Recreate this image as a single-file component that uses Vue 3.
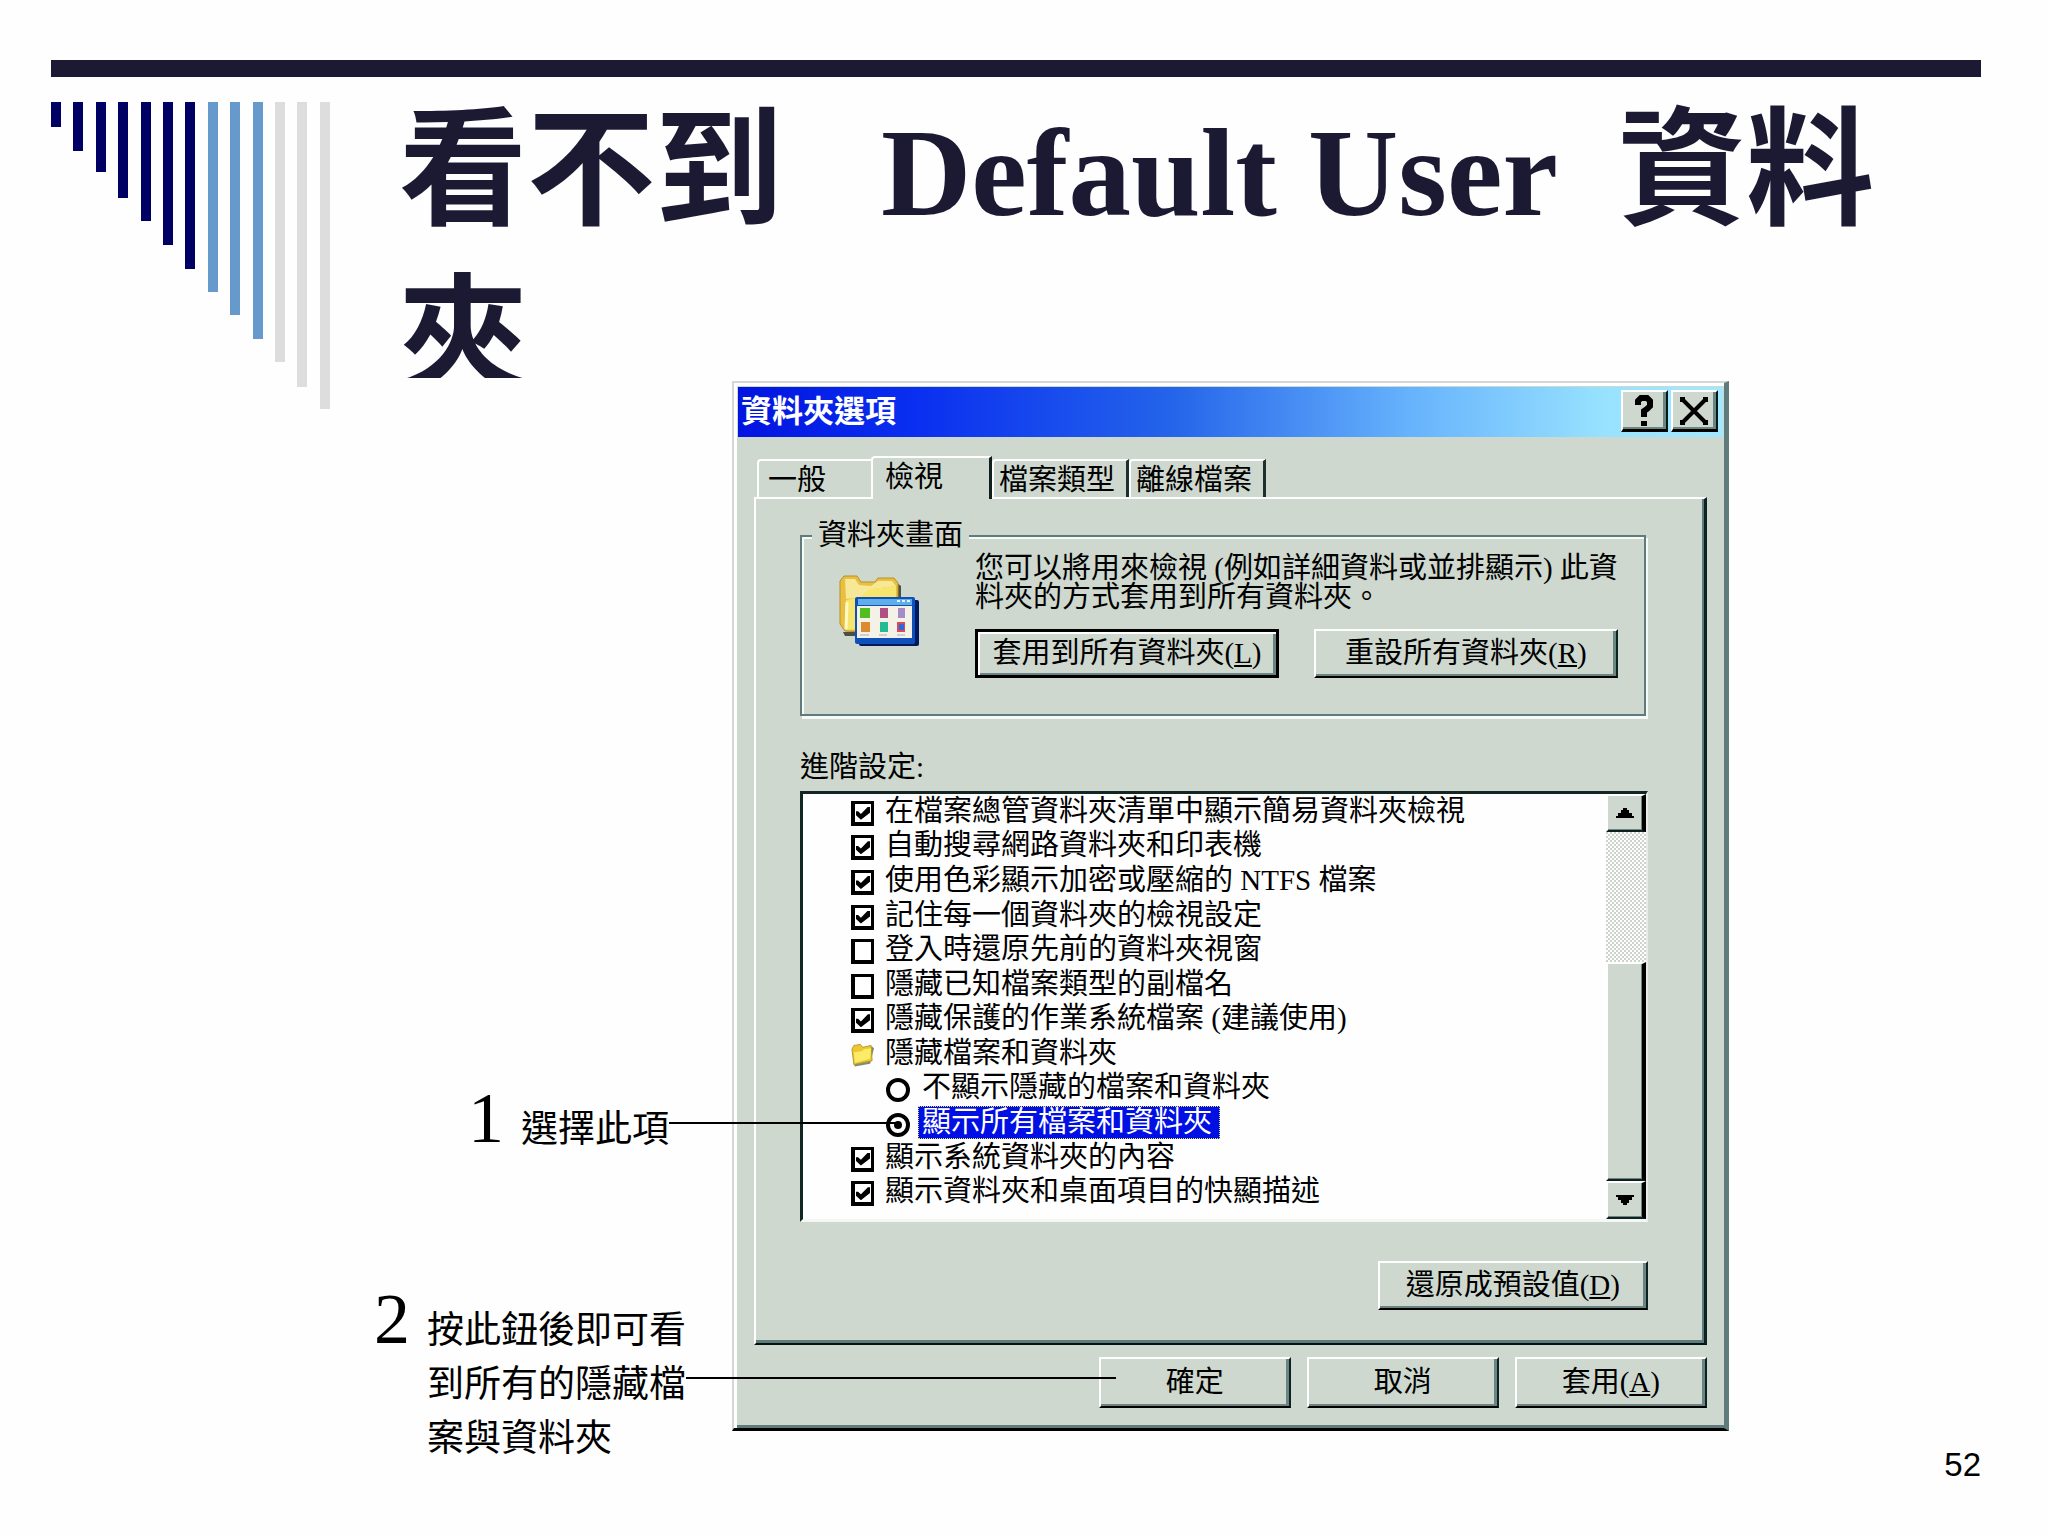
<script setup>
import { ref } from 'vue'

const stripes = [
  { h: 25, c: 'navy' }, { h: 49, c: 'navy' }, { h: 70, c: 'navy' }, { h: 96, c: 'navy' },
  { h: 119, c: 'navy' }, { h: 143, c: 'navy' }, { h: 167, c: 'navy' },
  { h: 190, c: 'sky' }, { h: 213, c: 'sky' }, { h: 237, c: 'sky' },
  { h: 260, c: 'pale' }, { h: 285, c: 'pale' }, { h: 307, c: 'pale' }
]

const rows = ref([
  { type: 'check', on: true, text: '在檔案總管資料夾清單中顯示簡易資料夾檢視' },
  { type: 'check', on: true, text: '自動搜尋網路資料夾和印表機' },
  { type: 'check', on: true, text: '使用色彩顯示加密或壓縮的 NTFS 檔案' },
  { type: 'check', on: true, text: '記住每一個資料夾的檢視設定' },
  { type: 'check', on: false, text: '登入時還原先前的資料夾視窗' },
  { type: 'check', on: false, text: '隱藏已知檔案類型的副檔名' },
  { type: 'check', on: true, text: '隱藏保護的作業系統檔案 (建議使用)' },
  { type: 'folder', text: '隱藏檔案和資料夾' },
  { type: 'radio', value: 'hide', text: '不顯示隱藏的檔案和資料夾' },
  { type: 'radio', value: 'show', text: '顯示所有檔案和資料夾' },
  { type: 'check', on: true, text: '顯示系統資料夾的內容' },
  { type: 'check', on: true, text: '顯示資料夾和桌面項目的快顯描述' }
])
const hidden = ref('show')
</script>

<template>
  <main class="slide">
    <div class="rule"></div>
    <div class="body">
      <div class="stripes" aria-hidden="true">
        <i v-for="(s, n) in stripes" :key="n" :class="s.c" :style="{ height: s.h + 'px' }"></i>
      </div>
      <h1>看不到<span class="latin">Default User</span>資料夾</h1>

      <section class="figure">
        <ol class="callouts">
          <li class="callout first">
            <span class="num">1</span>
            <p><span class="lead short">選擇此項</span></p>
          </li>
          <li class="callout">
            <span class="num">2</span>
            <p>按此鈕後即可看<br><span class="lead long">到所有的隱藏檔</span><br>案與資料夾</p>
          </li>
        </ol>

        <div class="dialog">
          <header class="titlebar">
            <h2>資料夾選項</h2>
            <button class="cap" aria-label="說明">
              <svg width="20" height="32" viewBox="0 0 20 32"><path d="M4 10V6l3-3h6l3 3v5l-3 3-3 2v6" fill="none" stroke="#000" stroke-width="6" /><path d="M7 26h6v5H7z" /></svg>
            </button>
            <button class="cap" aria-label="關閉">
              <svg width="28" height="28" viewBox="0 0 28 28"><path d="M2 2l24 24M26 2L2 26" stroke="#000" stroke-width="4" /><path d="M0 0h5v5H0zM23 0h5v5h-5zM0 23h5v5H0zM23 23h5v5h-5z" /></svg>
            </button>
          </header>

          <nav class="tabs">
            <button class="tab">一般</button>
            <button class="tab active">檢視</button>
            <button class="tab wide">檔案類型</button>
            <button class="tab wide">離線檔案</button>
          </nav>

          <div class="panel">
            <fieldset class="group">
              <legend>資料夾畫面</legend>
              <svg class="view-icon" width="84" height="76" viewBox="0 0 84 76">
                <path d="M6 58h12v4H8zM56 6l8 6v16h-4V10z" fill="#1d2416" opacity=".75" />
                <path d="M3 7l4-5h13l4 6h14l3-4h16l4 5v17H26v32L8 57 3 50z" fill="#e8bf3e" stroke="#b98f2c" />
                <path d="M8 5h10l4 6 12 1 7-5h14l4 5-22 3-10 8-18 2z" fill="#f6e896" />
                <path d="M9 26l14-3 10-8 26-3v12H26v31L8 56z" fill="#f8e56d" />
                <path d="M10 28l-1 27" stroke="#fffac4" stroke-width="3" />
                <rect x="22" y="26" width="60" height="46" rx="2" fill="#001a60" />
                <rect x="18" y="23" width="60" height="47" rx="2" fill="#0f50ba" />
                <rect x="21" y="25" width="54" height="6" fill="#5faee8" />
                <path d="M60 27h3M65 27h3M70 27h3" stroke="#e3f3ff" stroke-width="2" />
                <rect x="20" y="32" width="55" height="32" fill="#f4f2e6" />
                <path d="M23 34h10v10H23z" fill="#52bd20" />
                <path d="M43 34h8v10h-8z" fill="#b04f83" />
                <path d="M61 34h7v10h-7z" fill="#a58bc7" />
                <path d="M24 48h9v10h-9z" fill="#dc8930" />
                <path d="M43 48h8v10h-8z" fill="#26b994" />
                <path d="M60 48h8v10h-8z" fill="#d94a5b" />
                <path d="M62 50h5v6h-5z" fill="#3465d7" />
                <path d="M23 61h9M42 61h8M60 61h8" stroke="#a9a9bd" />
              </svg>
              <div class="group-main">
                <p>您可以將用來檢視 (例如詳細資料或並排顯示) 此資<br>料夾的方式套用到所有資料夾。</p>
                <div class="pair">
                  <button class="btn default">套用到所有資料夾(<u>L</u>)</button>
                  <button class="btn">重設所有資料夾(<u>R</u>)</button>
                </div>
              </div>
            </fieldset>

            <h3>進階設定:</h3>
            <div class="listbox">
              <ul>
                <li v-for="(r, n) in rows" :key="n">
                  <label v-if="r.type === 'check'"><input v-model="r.on" type="checkbox"><span>{{ r.text }}</span></label>
                  <label v-else-if="r.type === 'radio'" class="sub">
                    <input v-model="hidden" type="radio" name="hidden-files" :value="r.value">
                    <span class="choice" :class="{ selected: hidden === r.value }">{{ r.text }}</span>
                  </label>
                  <div v-else class="folder">
                    <svg width="23" height="25" viewBox="0 0 24 25">
                      <path d="M3 21l1 3 16-3 4-16-2-2z" fill="#4c5a3c" opacity=".7" />
                      <path d="M1 6l2-4 7-1 2 3 9-2 1 16-19 4z" fill="#eec62f" stroke="#b4982c" />
                      <path d="M3 9l8-1 3-2 7-1-1 11-16 4z" fill="#fbec68" />
                    </svg>
                    <span>{{ r.text }}</span>
                  </div>
                </li>
              </ul>
              <div class="scroll">
                <button class="arrow" aria-label="向上"><svg width="18" height="10" viewBox="0 0 18 10"><path d="M7 0h4v2h2v3h3v3h2v2H0V8h2V5h3V2h2z" /></svg></button>
                <div class="track"></div>
                <div class="thumb"></div>
                <button class="arrow" aria-label="向下"><svg width="18" height="10" viewBox="0 0 18 10"><path d="M0 0h18v2h-2v3h-3v3h-2v2H7V8H5V5H2V2H0z" /></svg></button>
              </div>
            </div>
            <button class="btn restore">還原成預設值(<u>D</u>)</button>
          </div>

          <footer class="actions">
            <button class="btn">確定</button>
            <button class="btn">取消</button>
            <button class="btn">套用(<u>A</u>)</button>
          </footer>
        </div>

        <div class="page-no">52</div>
      </section>
    </div>
  </main>
</template>

<style>
body {
  margin: 0;
  background: #fefefe;
}
</style>

<style scoped>
* {
  box-sizing: border-box;
}
h1, h2, h3, p, ul, ol {
  margin: 0;
  padding: 0;
  list-style: none;
  font-weight: 400;
}
.slide {
  min-height: 100vh;
  padding: 60px 67px 0 51px;
  color: #000;
}
.rule {
  height: 17px;
  background: #1c1a33;
}
.body {
  display: grid;
  grid-template-columns: 279px 1fr;
  grid-template-rows: 301px auto;
}
.stripes {
  grid-row: 1 / 3;
  display: flex;
  justify-content: space-between;
  padding-top: 25px;
}
.stripes i {
  width: 10px;
}
.navy {
  background: #000064;
}
.sky {
  background: #6699cc;
}
.pale {
  background: #dddddd;
}
h1 {
  overflow: hidden;
  padding-left: 69px;
  color: #1c1a33;
  font: 700 128px/166px "Noto Sans CJK TC", sans-serif;
}
.latin {
  margin: 0 60px 0 98px;
  font: 700 125px/100px "Liberation Serif", serif;
}
.figure {
  display: flex;
  align-items: flex-start;
  padding: 3px 0 0 44px;
}
.callouts {
  flex: none;
  width: 358px;
  padding: 710px 0 21px;
  font: 300 37px/54px "Noto Sans CJK TC", sans-serif;
}
.callout {
  display: flex;
  align-items: baseline;
  gap: 17px;
}
.first {
  margin: 0 0 139px 94px;
}
.num {
  font: 400 72px/54px "Liberation Serif", serif;
}
.lead {
  position: relative;
}
.lead::after {
  content: "";
  position: absolute;
  z-index: 1;
  top: 42%;
  left: 100%;
  height: 2px;
  background: #000;
}
.short::after {
  width: 228px;
}
.long::after {
  width: 430px;
}
.dialog {
  flex: 0 1 995px;
  padding: 0 17px 20px 0;
  background: #ced8ce;
  border: 2px solid #d3d8d3;
  border-right: 5px solid #5f7b7c;
  border-bottom: 3px solid #000;
  box-shadow: inset 3px 3px #fff, inset 0 -3px #5f7b7c;
  color: #000;
  font: 400 29px/29px "Liberation Serif", "Noto Sans CJK TC", serif;
}
button {
  display: flex;
  align-items: center;
  justify-content: center;
  padding: 0;
  border: 0;
  border-radius: 0;
  background: #ced8ce;
  color: #000;
  font: inherit;
  white-space: pre;
}
.titlebar {
  display: flex;
  align-items: center;
  gap: 3px;
  height: 54px;
  margin: 0 -16px 0 4px;
  padding: 2px 5px 0 3px;
  background: linear-gradient(90deg, #0214e0 0%, #0a2ff0 18%, #2464ea 44%, #66b2fc 68%, #98e2ff 88%, #a4e8ff 100%) 0 4px / 100% 50px no-repeat;
}
.titlebar h2 {
  flex: 1;
  padding-bottom: 4px;
  color: #fff;
  font: 700 31px/44px "Noto Sans CJK TC", sans-serif;
}
.cap {
  width: 47px;
  height: 42px;
  border: solid;
  border-width: 2px 2px 3px;
  border-color: #fff #001a1a #000 #fff;
  box-shadow: inset -3px -2px #6b8583;
}
.tabs {
  display: flex;
  align-items: flex-end;
  margin: 19px 0 0 23px;
}
.tab {
  justify-content: flex-start;
  width: 114px;
  height: 38px;
  padding: 3px 0 0 9px;
  border: 2px solid #fff;
  border-width: 2px 0 0 2px;
  border-radius: 4px 0 0 0;
}
.tab.active {
  position: relative;
  width: 121px;
  height: 43px;
  margin-bottom: -2px;
  padding: 0 0 3px 12px;
  border-right: 3px solid #10201f;
  border-left-width: 2px;
}
.tab.wide {
  width: 137px;
  padding-left: 5px;
  border-right: 3px solid #1c302f;
}
.panel {
  display: flex;
  flex-direction: column;
  margin-left: 20px;
  padding: 22px 56px 33px 44px;
  border: 2px solid #fff;
  border-right: 3px solid #0c2324;
  border-bottom: 2px solid #001212;
  box-shadow: inset -2px -3px #5f7b7c;
}
.group {
  display: flex;
  align-items: flex-start;
  min-width: 0;
  height: 195px;
  margin: 0 2px 3px 0;
  padding: 4px 26px 0 35px;
  border: 2px solid #5f7b7c;
  box-shadow: 2px 3px #f6faf6, inset 2px 2px #f6faf6;
}
legend {
  margin-left: -25px;
  padding: 0 6px;
  background: #ced8ce;
}
.view-icon {
  flex: none;
  margin: 20px 54px 0 0;
}
.group-main {
  flex: 1;
  white-space: nowrap;
}
.pair {
  display: flex;
  justify-content: space-between;
  margin-top: 17px;
}
.btn {
  width: 304px;
  height: 49px;
  border: 2px solid #fff;
  border-right-color: #0c2324;
  border-bottom-color: #000;
  box-shadow: inset -3px -2px #6b8583;
}
.btn.default {
  border: 3px solid #000;
  box-shadow: inset 2px 2px #fff, inset -3px -2px #6b8583;
}
h3 {
  margin: 34px 0 9px;
  font: inherit;
}
.listbox {
  display: flex;
  height: 431px;
  background: #fefefe;
  border: 3px solid #142624;
  border-right: 2px solid #e5ece5;
  border-bottom: 3px solid #f4f8f4;
}
.listbox ul {
  flex: 1;
  display: grid;
  grid-auto-rows: 1fr;
  padding: 0 0 10px 48px;
}
li label, .folder {
  display: flex;
  align-items: center;
  gap: 11px;
  height: 100%;
  white-space: pre;
}
li label > input, .folder > svg {
  position: relative;
  top: 2px;
}
li label.sub {
  padding-left: 35px;
  gap: 8px;
}
input {
  flex: none;
  appearance: none;
  width: 23px;
  height: 25px;
  margin: 0;
  border: 4px solid #000;
  border-width: 3px 3px 4px 4px;
  background: #fff;
}
input[type="checkbox"]:checked::after {
  content: "";
  position: absolute;
  inset: 3px 1px 2px;
  background: #000;
  clip-path: polygon(0 35%, 15% 35%, 35% 55%, 85% 0, 100% 0, 100% 45%, 35% 100%, 0 65%);
}
input[type="radio"] {
  width: 24px;
  height: 24px;
  border-width: 4px;
  border-radius: 50%;
}
input[type="radio"]:checked::after {
  content: "";
  position: absolute;
  inset: 4px;
  border-radius: 50%;
  background: #000;
}
.choice {
  padding: 2px 8px 2px 4px;
}
.selected {
  background: #0010e4;
  color: #fff;
  outline: 1px dotted #e8e060;
  outline-offset: -1px;
}
.scroll {
  display: flex;
  flex-direction: column;
  width: 40px;
}
.arrow, .thumb {
  flex: none;
  height: 38px;
  background: #ced8ce;
  border: solid;
  border-width: 2px 4px 2px 2px;
  border-color: #fff #000 #10201f #fff;
  box-shadow: inset -1px -1px #6b8583;
}
.thumb {
  height: 219px;
}
.track {
  flex: 1;
  background: conic-gradient(#fff 25%, #cbd3cb 0 50%, #fff 0 75%, #cbd3cb 0) 0 0 / 4px 4px;
}
.restore {
  align-self: flex-end;
  width: 270px;
  margin-top: 39px;
}
.actions {
  display: flex;
  justify-content: flex-end;
  gap: 16px;
  margin-top: 12px;
}
.actions .btn {
  width: 192px;
  height: 51px;
}
.page-no {
  align-self: flex-end;
  margin-left: auto;
  font: 400 33px/36px "Liberation Sans", sans-serif;
}
</style>
